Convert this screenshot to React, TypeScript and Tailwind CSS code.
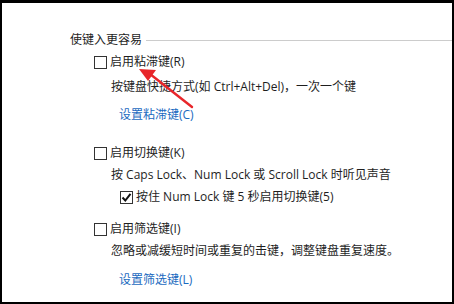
import React from 'react';

const font = { fontFamily: '"Open Sans", "Noto Sans CJK SC", sans-serif' };

function Box({ checked = false }: { checked?: boolean }) {
    return (
        <span className="w-[13px] h-[13px] border border-[#333333] bg-white flex items-center justify-center shrink-0">
            {checked && (
                <svg width="11" height="11" viewBox="0 0 11 11">
                    <path d="M1.5 5.5 L4.3 8.5 L9.5 1.8" fill="none" stroke="#111" strokeWidth="2" />
                </svg>
            )}
        </span>
    );
}

export default function App() {
    return (
        <div className="w-[454px] h-[304px] bg-black pt-[3px] pl-[2px] pr-[2px] pb-[2px]" style={font}>
            <div className="relative flex flex-col w-full h-full bg-white text-[12px] text-[#1e1e1e] leading-none">
                {/* group header */}
                <div className="flex items-center h-[16px] mt-[29px] pl-[68px]">
                    <span>使键入更容易</span>
                    <div className="flex-1 h-px bg-[#cccccc] ml-[4px]" />
                </div>

                {/* 粘滞键 */}
                <div className="flex items-center gap-[3px] h-[16px] mt-[6px] pl-[92px]">
                    <Box />
                    <span>启用粘滞键(R)</span>
                </div>
                <div className="flex items-center h-[16px] mt-[9px] pl-[109px]">
                    按键盘快捷方式(如 Ctrl+Alt+Del)，一次一个键
                </div>
                <div className="flex items-center h-[16px] mt-[12px] pl-[117px] text-[#1a6ac0]">
                    设置粘滞键(C)
                </div>

                {/* 切换键 */}
                <div className="flex items-center gap-[3px] h-[16px] mt-[22px] pl-[92px]">
                    <Box />
                    <span>启用切换键(K)</span>
                </div>
                <div className="flex items-center h-[16px] mt-[6px] pl-[109px]">
                    按 Caps Lock、Num Lock 或 Scroll Lock 时听见声音
                </div>
                <div className="flex items-center gap-[3px] h-[16px] mt-[6px] pl-[118px]">
                    <Box checked />
                    <span>按住 Num Lock 键 5 秒启用切换键(5)</span>
                </div>

                {/* 筛选键 */}
                <div className="flex items-center gap-[3px] h-[16px] mt-[16px] pl-[92px]">
                    <Box />
                    <span>启用筛选键(I)</span>
                </div>
                <div className="flex items-center h-[16px] mt-[6px] pl-[109px]">
                    忽略或减缓短时间或重复的击键，调整键盘重复速度。
                </div>
                <div className="flex items-center h-[16px] mt-[13px] pl-[117px] text-[#1a6ac0]">
                    设置筛选键(L)
                </div>

                {/* red annotation arrow */}
                <svg className="absolute left-0 top-0 pointer-events-none" width="450" height="299">
                    <line x1="190" y1="104" x2="148" y2="71" stroke="#e8262a" strokeWidth="2.4" strokeLinecap="round" />
                    <polygon points="137,66 154,67 146,78" fill="#e8262a" />
                </svg>
            </div>
        </div>
    );
}
